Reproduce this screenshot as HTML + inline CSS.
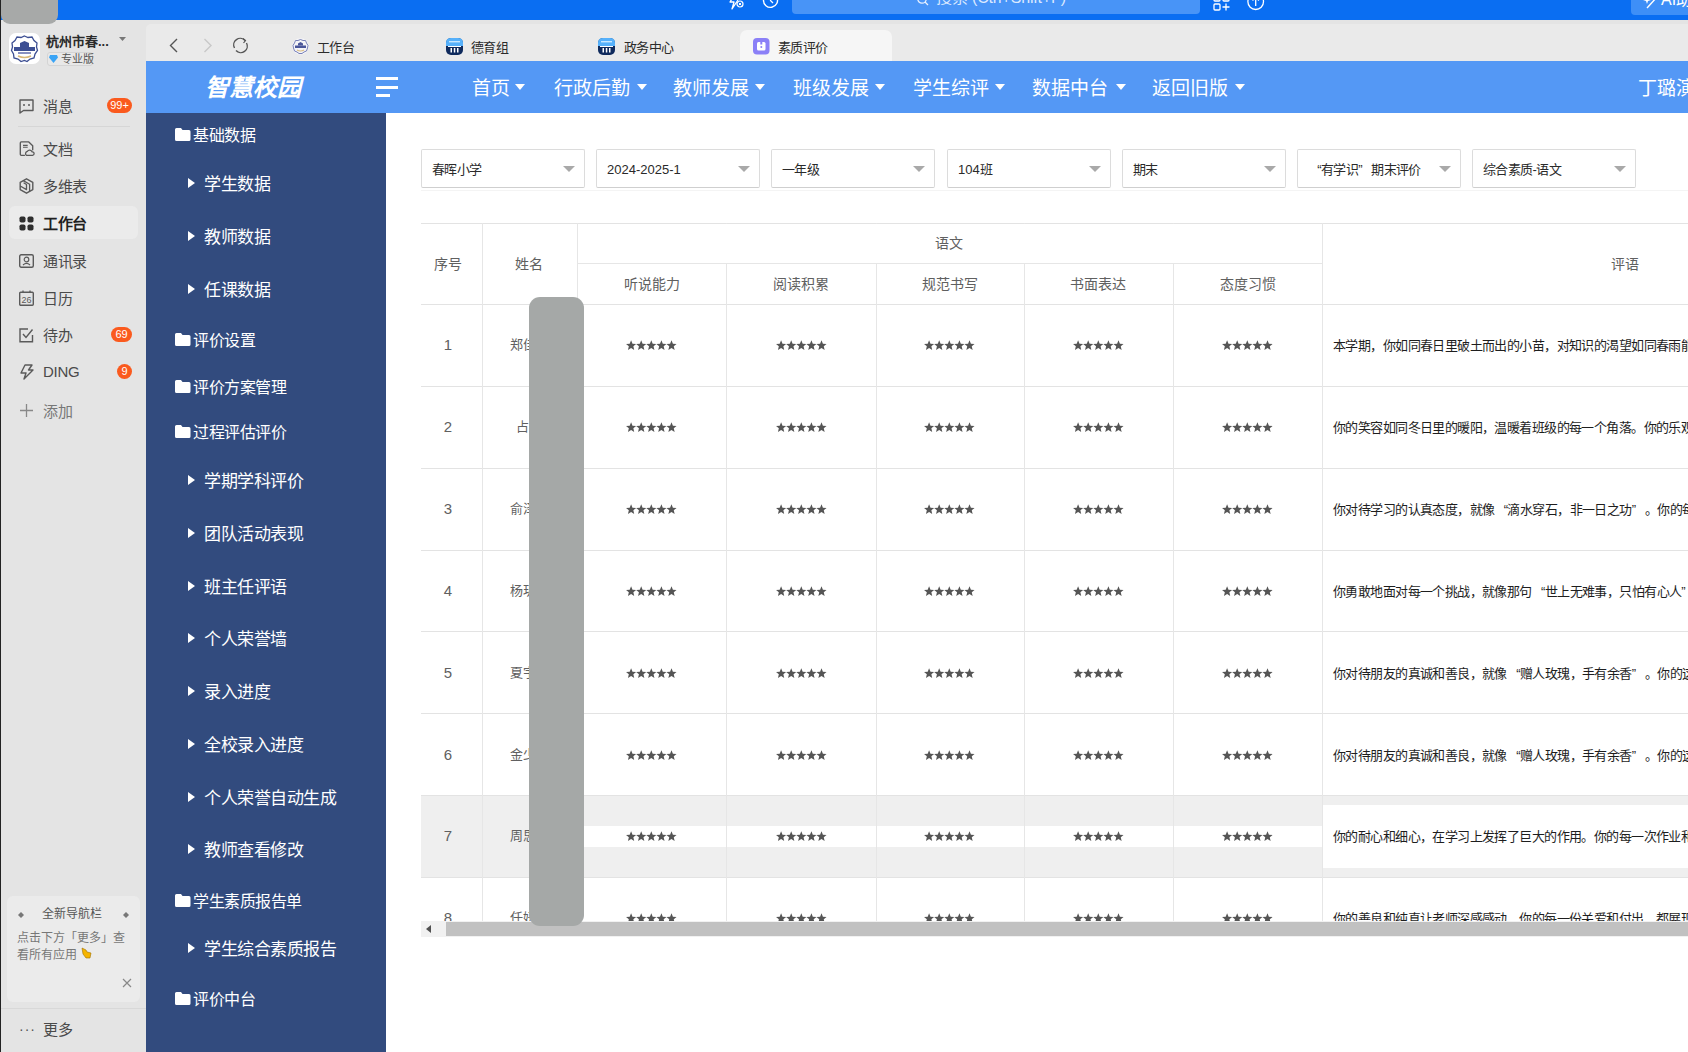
<!DOCTYPE html><html lang="zh-CN"><head><meta charset="utf-8"><style>
*{box-sizing:border-box;margin:0;padding:0}
html,body{width:1688px;height:1052px;overflow:hidden;background:#e4e4e4;font-family:"Liberation Sans",sans-serif;position:relative}
.abs{position:absolute}
svg{position:absolute;overflow:visible}
#topbar{left:0;top:0;width:1688px;height:20px;background:#0a6ef2}
#blob{left:1px;top:0;width:57px;height:24px;background:#a7a9a8;border-radius:0 0 9px 9px}
#dside{left:0;top:20px;width:146px;height:1032px;background:#e4e4e4}
#edge{left:0;top:0;width:1px;height:1052px;background:#222}
#tabbar{left:146px;top:24px;width:1542px;height:37px;background:#eaeaea;border-top-left-radius:5px}
#header{left:146px;top:61px;width:1542px;height:52px;background:#5498f5}
#nside{left:146px;top:113px;width:240px;height:939px;background:#324b7e}
#content{left:386px;top:113px;width:1302px;height:939px;background:#fff}
.dt{position:absolute;left:43px;font-size:15px;letter-spacing:-0.3px;color:#4a4a4a;line-height:16px;white-space:nowrap}
.ql{display:inline-block;width:1em;text-align:right}.qr{display:inline-block;width:1em;text-align:left}
.badge{position:absolute;height:15px;border-radius:8px;background:#fa5a1e;color:#fff;font-size:11px;line-height:15px;text-align:center}
</style></head><body>
<svg width="0" height="0" style="position:absolute"><defs><g id="stars" fill="#555"><path transform="translate(5.10 5.6)" d="M0.00 -5.30 L1.40 -1.93 L5.04 -1.64 L2.27 0.74 L3.12 4.29 L0.00 2.38 L-3.12 4.29 L-2.27 0.74 L-5.04 -1.64 L-1.40 -1.93Z"/><path transform="translate(15.20 5.6)" d="M0.00 -5.30 L1.40 -1.93 L5.04 -1.64 L2.27 0.74 L3.12 4.29 L0.00 2.38 L-3.12 4.29 L-2.27 0.74 L-5.04 -1.64 L-1.40 -1.93Z"/><path transform="translate(25.30 5.6)" d="M0.00 -5.30 L1.40 -1.93 L5.04 -1.64 L2.27 0.74 L3.12 4.29 L0.00 2.38 L-3.12 4.29 L-2.27 0.74 L-5.04 -1.64 L-1.40 -1.93Z"/><path transform="translate(35.40 5.6)" d="M0.00 -5.30 L1.40 -1.93 L5.04 -1.64 L2.27 0.74 L3.12 4.29 L0.00 2.38 L-3.12 4.29 L-2.27 0.74 L-5.04 -1.64 L-1.40 -1.93Z"/><path transform="translate(45.50 5.6)" d="M0.00 -5.30 L1.40 -1.93 L5.04 -1.64 L2.27 0.74 L3.12 4.29 L0.00 2.38 L-3.12 4.29 L-2.27 0.74 L-5.04 -1.64 L-1.40 -1.93Z"/></g></defs></svg>
<div id="dside" class="abs"></div>
<div id="topbar" class="abs"></div>
<div id="blob" class="abs"></div>
<div id="edge" class="abs"></div>
<div class="abs" style="left:9px;top:33px;width:31px;height:31px;border-radius:7px;background:#fff"></div>
<svg style="left:9px;top:33px" width="31" height="31" viewBox="0 0 31 31"><path d="M15.5 3 L19 4.5 L23 4 L25 7.5 L28 10 L27.5 14 L28.5 17.5 L26 21 L25 25 L21 26 L18 28.5 L15.5 27.5 L12 28.5 L9 26 L5 25 L4.5 21 L2.5 17.5 L3.5 14 L3 10 L6 7.5 L8 4 L12 4.5 Z" fill="none" stroke="#3d4f93" stroke-width="1.3"/><rect x="5" y="14" width="21" height="4" fill="#3d4f93"/><path d="M11 14 L11 10 L15.5 8 L20 10 L20 14 Z" fill="#3d4f93"/><rect x="9" y="19" width="13" height="2" fill="#8890c0"/><path d="M9 23 Q15.5 26 22 23" stroke="#d9b878" stroke-width="1.5" fill="none"/></svg>
<div class="abs" style="left:46px;top:34px;font-size:13px;font-weight:bold;color:#2a2a2a;line-height:15px;white-space:nowrap">杭州市春...</div>
<svg style="left:119px;top:37px" width="8" height="5"><path d="M0 0 L7 0 L3.5 4 Z" fill="#777"/></svg>
<div class="abs" style="left:47px;top:52px;width:46px;height:14px;border:1px solid #d4d4d4;border-radius:3px;background:#e8e8e8"></div>
<svg style="left:49px;top:55px" width="9" height="8"><path d="M1 0 L8 0 L9 2.5 L4.5 8 L0 2.5 Z" fill="#3aa4f5"/></svg>
<div class="abs" style="left:61px;top:52px;font-size:11px;color:#555;line-height:14px;white-space:nowrap">专业版</div>
<div class="abs" style="left:9px;top:206px;width:129px;height:33px;border-radius:6px;background:#ebebeb"></div>
<div class="abs" style="left:18px;top:126px;width:112px;height:1px;background:#d6d6d6"></div>
<div class="dt" style="top:99px;">消息</div>
<div class="dt" style="top:142px;">文档</div>
<div class="dt" style="top:179px;">多维表</div>
<div class="dt" style="top:216px;font-weight:bold;color:#1f1f1f;">工作台</div>
<div class="dt" style="top:254px;">通讯录</div>
<div class="dt" style="top:291px;">日历</div>
<div class="dt" style="top:328px;">待办</div>
<div class="dt" style="top:364px;font-size:15px;">DING</div>
<div class="dt" style="top:404px;color:#777;">添加</div>
<svg style="left:19px;top:99px" width="15" height="15"><path d="M1 1 H14 V11.5 H4.5 L1 14 Z" fill="none" stroke="#5a5a5a" stroke-width="1.4" stroke-linejoin="round"/><circle cx="5" cy="6" r="1" fill="#5a5a5a"/><circle cx="10" cy="6" r="1" fill="#5a5a5a"/></svg>
<svg style="left:19px;top:141px" width="15" height="15"><path d="M5.5 14.3 H2.3 Q1.3 14.3 1.3 13.3 V1.9 Q1.3 0.9 2.3 0.9 H9.8 L13.7 4.8 V8.8" fill="none" stroke="#5a5a5a" stroke-width="1.35" stroke-linejoin="round" stroke-linecap="round"/><path d="M4 4.4 H8.7 M4 6.3 H8.7" stroke="#5a5a5a" stroke-width="1.1"/><path d="M7.4 14.3 A2.2 2.2 0 0 1 8.3 10.4 A2.8 2.8 0 0 1 13.2 10.9 A1.7 1.7 0 0 1 13.6 14.3 Z" fill="none" stroke="#5a5a5a" stroke-width="1.3" stroke-linejoin="round"/></svg>
<svg style="left:19px;top:178px" width="15" height="16"><path d="M7.5 0.8 L13.8 4.4 V11.6 L7.5 15.2 L1.2 11.6 V4.4 Z" fill="none" stroke="#5a5a5a" stroke-width="1.4" stroke-linejoin="round"/><path d="M4.3 2.6 L10.6 6.2 V13.4 M1.2 8 L7.5 11.6 V6.5 L4.6 4.8" fill="none" stroke="#5a5a5a" stroke-width="1.3" stroke-linejoin="round"/></svg>
<svg style="left:19px;top:216px" width="15" height="15"><rect x="0.5" y="0.5" width="6" height="6" rx="1.8" fill="#2e2e2e"/><rect x="8.5" y="0.5" width="6" height="6" rx="1.8" fill="#2e2e2e"/><rect x="0.5" y="8.5" width="6" height="6" rx="1.8" fill="#2e2e2e"/><rect x="8.5" y="8.5" width="6" height="6" rx="1.8" fill="#2e2e2e"/></svg>
<svg style="left:19px;top:254px" width="15" height="14"><rect x="0.7" y="0.7" width="13.6" height="12.6" rx="1.5" fill="none" stroke="#5a5a5a" stroke-width="1.4"/><circle cx="7.5" cy="5.5" r="2.3" fill="none" stroke="#5a5a5a" stroke-width="1.2"/><path d="M4 11 Q7.5 7.8 11 11" fill="none" stroke="#5a5a5a" stroke-width="1.2"/></svg>
<svg style="left:19px;top:290px" width="15" height="16"><rect x="0.7" y="2.2" width="13.6" height="13" rx="1" fill="none" stroke="#5a5a5a" stroke-width="1.4"/><path d="M4 0.5 V3 M11 0.5 V3" stroke="#5a5a5a" stroke-width="1.3"/><text x="7.5" y="13" font-size="9" text-anchor="middle" fill="#5a5a5a" font-family="Liberation Sans">26</text></svg>
<svg style="left:19px;top:328px" width="15" height="15"><path d="M13.5 7 V13.8 H1 V1 H9" fill="none" stroke="#5a5a5a" stroke-width="1.4"/><path d="M4 6 L7 9.5 L13.5 1.5" fill="none" stroke="#5a5a5a" stroke-width="1.4"/></svg>
<svg style="left:19px;top:364px" width="15" height="16"><path d="M6 1 H13 L9.5 6 H14 L5 15 L7 9 H2 Z" fill="none" stroke="#5a5a5a" stroke-width="1.4" stroke-linejoin="round"/></svg>
<svg style="left:19px;top:403px" width="15" height="15"><path d="M7.5 1 V14 M1 7.5 H14" stroke="#888" stroke-width="1.3"/></svg>
<div class="badge" style="left:107px;top:98px;width:25px">99+</div>
<div class="badge" style="left:111px;top:327px;width:21px">69</div>
<div class="badge" style="left:117px;top:364px;width:15px">9</div>
<div class="abs" style="left:7px;top:896px;width:133px;height:106px;border-radius:6px;background:#ebebeb"></div>
<div class="abs" style="left:42px;top:907px;font-size:12px;color:#555;line-height:15px;white-space:nowrap">全新导航栏</div>
<svg style="left:18px;top:912px" width="6" height="6"><path d="M3 0 L6 3 L3 6 L0 3Z" fill="#777"/></svg>
<svg style="left:123px;top:912px" width="6" height="6"><path d="M3 0 L6 3 L3 6 L0 3Z" fill="#777"/></svg>
<div class="abs" style="left:17px;top:930px;width:118px;font-size:12px;color:#777;line-height:17px;">点击下方「更多」查看所有应用</div>
<svg style="left:80px;top:947px" width="12" height="12"><path d="M2 1 L6 3 L7 5 L11 6 L10 11 L6 11 L3 7 Z" fill="#f5b400" stroke="#a07000" stroke-width="0.6"/></svg>
<svg style="left:122px;top:978px" width="10" height="10"><path d="M1 1 L9 9 M9 1 L1 9" stroke="#888" stroke-width="1.2"/></svg>
<div class="abs" style="left:1px;top:1008px;width:145px;height:1px;background:#d8d8d8"></div>
<div class="abs" style="left:19px;top:1021px;font-size:14px;color:#555;line-height:16px;letter-spacing:1px">···</div>
<div class="dt" style="top:1022px">更多</div>
<div id="tabbar" class="abs"></div>
<div id="header" class="abs"></div>
<div id="nside" class="abs"></div>
<div id="content" class="abs"></div>
<div class="abs" style="left:792px;top:-6px;width:408px;height:20px;border-radius:4px;background:#4894f7"></div>
<svg style="left:917px;top:-6px" width="12" height="12"><circle cx="5" cy="5" r="4.2" fill="none" stroke="#e8f1ff" stroke-width="1.3"/><path d="M8 8 L11 11" stroke="#e8f1ff" stroke-width="1.3"/></svg>
<div class="abs" style="left:936px;top:-10px;font-size:16px;letter-spacing:-0.15px;color:#dbe9ff;line-height:16px;white-space:nowrap">搜索 (Ctrl+Shift+F)</div>
<svg style="left:729px;top:-6px" width="15" height="16"><path d="M6 0 L1 8 H5 L3 15 L9 6" fill="none" stroke="#fff" stroke-width="1.3" stroke-linejoin="round"/><circle cx="11" cy="10" r="3" fill="none" stroke="#fff" stroke-width="1.2"/><path d="M9.7 8.7 L12.3 11.3 M12.3 8.7 L9.7 11.3" stroke="#fff" stroke-width="1"/></svg>
<svg style="left:762px;top:-8px" width="17" height="18"><path d="M1.5 8 A7 7 0 1 0 4 3" fill="none" stroke="#fff" stroke-width="1.4"/><path d="M8.5 4 V8.5 L11 11" fill="none" stroke="#fff" stroke-width="1.3"/></svg>
<svg style="left:1213px;top:-6px" width="17" height="18"><rect x="1" y="1" width="6" height="6" rx="1" fill="none" stroke="#fff" stroke-width="1.3"/><rect x="1" y="10" width="6" height="6" rx="1" fill="none" stroke="#fff" stroke-width="1.3"/><rect x="10" y="1" width="6" height="6" rx="1" fill="none" stroke="#fff" stroke-width="1.3"/><path d="M13 9.5 V16.5 M9.5 13 H16.5" stroke="#fff" stroke-width="1.3"/></svg>
<svg style="left:1247px;top:-7px" width="18" height="18"><circle cx="8.7" cy="8.7" r="7.8" fill="none" stroke="#fff" stroke-width="1.3"/><path d="M8.7 13 V4.5 M5.5 7.5 L8.7 4.5 L11.9 7.5" fill="none" stroke="#fff" stroke-width="1.3"/></svg>
<div class="abs" style="left:1631px;top:-6px;width:70px;height:21px;border-radius:4px;background:#3e8ff7"></div>
<svg style="left:1644px;top:-4px" width="14" height="13"><path d="M13 1 L3 12" stroke="#fff" stroke-width="1.4"/><path d="M3 0 L4 3 L7 4 L4 5 L3 8 L2 5 L-1 4 L2 3 Z" fill="#fff"/></svg>
<div class="abs" style="left:1661px;top:-9px;font-size:16px;color:#fff;line-height:17px;white-space:nowrap">AI助理</div>
<svg style="left:169px;top:38px" width="10" height="16"><path d="M8 1 L1.5 7.5 L8 14" fill="none" stroke="#555" stroke-width="1.4"/></svg>
<svg style="left:203px;top:38px" width="10" height="16"><path d="M1.5 1 L8 7.5 L1.5 14" fill="none" stroke="#c8c8c8" stroke-width="1.4"/></svg>
<svg style="left:232px;top:37px" width="17" height="17"><path d="M2.5 11 A6.5 6.5 0 0 1 13 3.5 M14.5 6 A6.5 6.5 0 0 1 4 13.5" fill="none" stroke="#555" stroke-width="1.4"/><path d="M11 1.5 L13.5 3.5 L11.5 6" fill="none" stroke="#555" stroke-width="1.2"/></svg>
<div class="abs" style="left:740px;top:30px;width:152px;height:31px;border-radius:7px 7px 0 0;background:#f6f6f6"></div>
<svg style="left:292px;top:38px" width="17" height="17"><circle cx="8.5" cy="8.5" r="8.3" fill="#f4f4f8"/><path d="M8.5 1.5 L11 2.5 L13.5 2.5 L14.5 5 L16 7.5 L15.5 10 L14.5 13 L12 14 L10 15.5 L7 15.5 L5 14 L2.5 13 L1.5 10 L1 7.5 L2.5 5 L3.5 2.5 L6 2.5 Z" fill="none" stroke="#6a74b0" stroke-width="0.9"/><rect x="3" y="7.5" width="11" height="2.5" fill="#4a569a"/><path d="M6 7.5 V5.5 L8.5 4 L11 5.5 V7.5Z" fill="#4a569a"/><path d="M5 12 Q8.5 14 12 12" stroke="#d9bc80" stroke-width="1.2" fill="none"/></svg>
<svg style="left:446px;top:38px" width="17" height="17"><rect x="0" y="0" width="17" height="17" rx="5" fill="#0f2a5c"/><path d="M0 5 Q0 0 5 0 H12 Q17 0 17 5 V8 H0 Z" fill="#56b1fb"/><rect x="3" y="3" width="11" height="1.4" fill="#c8e8ff"/><rect x="2" y="8" width="13" height="1" fill="#fff"/><rect x="4.5" y="10" width="1.5" height="4.5" fill="#fff"/><rect x="7.8" y="10" width="1.5" height="4.5" fill="#fff"/><rect x="11" y="10" width="1.5" height="4.5" fill="#fff"/></svg>
<svg style="left:598px;top:38px" width="17" height="17"><rect x="0" y="0" width="17" height="17" rx="5" fill="#0f2a5c"/><path d="M0 5 Q0 0 5 0 H12 Q17 0 17 5 V8 H0 Z" fill="#56b1fb"/><rect x="3" y="3" width="11" height="1.4" fill="#c8e8ff"/><rect x="2" y="8" width="13" height="1" fill="#fff"/><rect x="4.5" y="10" width="1.5" height="4.5" fill="#fff"/><rect x="7.8" y="10" width="1.5" height="4.5" fill="#fff"/><rect x="11" y="10" width="1.5" height="4.5" fill="#fff"/></svg>
<svg style="left:753px;top:38px" width="17" height="17"><rect x="0" y="0" width="16.5" height="16.5" rx="4" fill="#8b80f7"/><rect x="4" y="4" width="8.5" height="8.5" rx="1.5" fill="#fff"/><rect x="7.3" y="4" width="2" height="2.5" fill="#8b80f7"/><circle cx="8.3" cy="9" r="1" fill="#8b80f7"/></svg>
<div class="abs" style="left:317px;top:39.5px;font-size:13px;letter-spacing:-0.6px;color:#2b2b2b;line-height:15px;white-space:nowrap">工作台</div>
<div class="abs" style="left:471px;top:39.5px;font-size:13px;letter-spacing:-0.6px;color:#2b2b2b;line-height:15px;white-space:nowrap">德育组</div>
<div class="abs" style="left:624px;top:39.5px;font-size:13px;letter-spacing:-0.6px;color:#2b2b2b;line-height:15px;white-space:nowrap">政务中心</div>
<div class="abs" style="left:778px;top:39.5px;font-size:13px;letter-spacing:-0.6px;color:#2b2b2b;line-height:15px;white-space:nowrap">素质评价</div>
<div class="abs" style="left:204.5px;top:73.5px;font-size:24px;font-weight:bold;font-style:italic;color:#fff;line-height:28px;white-space:nowrap;font-family:'Liberation Serif',serif">智慧校园</div>
<div class="abs" style="left:376px;top:77px;width:22px;height:3px;background:#fff"></div>
<div class="abs" style="left:376px;top:86px;width:22px;height:3px;background:#fff"></div>
<div class="abs" style="left:376px;top:94px;width:14px;height:3px;background:#fff"></div>
<div class="abs" style="left:472px;top:77.5px;font-size:19px;color:#fff;line-height:22px;white-space:nowrap">首页</div>
<svg style="left:515px;top:84px" width="10" height="6"><path d="M0 0 H10 L5 6 Z" fill="#fff"/></svg>
<div class="abs" style="left:554px;top:77.5px;font-size:19px;color:#fff;line-height:22px;white-space:nowrap">行政后勤</div>
<svg style="left:637px;top:84px" width="10" height="6"><path d="M0 0 H10 L5 6 Z" fill="#fff"/></svg>
<div class="abs" style="left:673px;top:77.5px;font-size:19px;color:#fff;line-height:22px;white-space:nowrap">教师发展</div>
<svg style="left:755px;top:84px" width="10" height="6"><path d="M0 0 H10 L5 6 Z" fill="#fff"/></svg>
<div class="abs" style="left:793px;top:77.5px;font-size:19px;color:#fff;line-height:22px;white-space:nowrap">班级发展</div>
<svg style="left:875px;top:84px" width="10" height="6"><path d="M0 0 H10 L5 6 Z" fill="#fff"/></svg>
<div class="abs" style="left:913px;top:77.5px;font-size:19px;color:#fff;line-height:22px;white-space:nowrap">学生综评</div>
<svg style="left:995px;top:84px" width="10" height="6"><path d="M0 0 H10 L5 6 Z" fill="#fff"/></svg>
<div class="abs" style="left:1032px;top:77.5px;font-size:19px;color:#fff;line-height:22px;white-space:nowrap">数据中台</div>
<svg style="left:1116px;top:84px" width="10" height="6"><path d="M0 0 H10 L5 6 Z" fill="#fff"/></svg>
<div class="abs" style="left:1152px;top:77.5px;font-size:19px;color:#fff;line-height:22px;white-space:nowrap">返回旧版</div>
<svg style="left:1235px;top:84px" width="10" height="6"><path d="M0 0 H10 L5 6 Z" fill="#fff"/></svg>
<div class="abs" style="left:1638px;top:77.5px;font-size:19px;color:#fff;line-height:22px;white-space:nowrap">丁璐演示</div>
<svg style="left:175px;top:128px" width="16" height="13"><path d="M0 1.5 Q0 0 1.5 0 H6 L7.5 2 H14 Q15.5 2 15.5 3.5 V11.5 Q15.5 13 14 13 H1.5 Q0 13 0 11.5 Z" fill="#fff"/></svg>
<div class="abs" style="left:193px;top:127px;font-size:16px;letter-spacing:-0.45px;color:#fff;line-height:18px;white-space:nowrap">基础数据</div>
<svg style="left:188px;top:178px" width="7" height="10"><path d="M0 0 L7 5 L0 10 Z" fill="#fff"/></svg>
<div class="abs" style="left:204px;top:175px;font-size:17px;letter-spacing:-0.45px;color:#fff;line-height:20px;white-space:nowrap">学生数据</div>
<svg style="left:188px;top:231px" width="7" height="10"><path d="M0 0 L7 5 L0 10 Z" fill="#fff"/></svg>
<div class="abs" style="left:204px;top:228px;font-size:17px;letter-spacing:-0.45px;color:#fff;line-height:20px;white-space:nowrap">教师数据</div>
<svg style="left:188px;top:284px" width="7" height="10"><path d="M0 0 L7 5 L0 10 Z" fill="#fff"/></svg>
<div class="abs" style="left:204px;top:281px;font-size:17px;letter-spacing:-0.45px;color:#fff;line-height:20px;white-space:nowrap">任课数据</div>
<svg style="left:175px;top:333px" width="16" height="13"><path d="M0 1.5 Q0 0 1.5 0 H6 L7.5 2 H14 Q15.5 2 15.5 3.5 V11.5 Q15.5 13 14 13 H1.5 Q0 13 0 11.5 Z" fill="#fff"/></svg>
<div class="abs" style="left:193px;top:332px;font-size:16px;letter-spacing:-0.45px;color:#fff;line-height:18px;white-space:nowrap">评价设置</div>
<svg style="left:175px;top:380px" width="16" height="13"><path d="M0 1.5 Q0 0 1.5 0 H6 L7.5 2 H14 Q15.5 2 15.5 3.5 V11.5 Q15.5 13 14 13 H1.5 Q0 13 0 11.5 Z" fill="#fff"/></svg>
<div class="abs" style="left:193px;top:379px;font-size:16px;letter-spacing:-0.45px;color:#fff;line-height:18px;white-space:nowrap">评价方案管理</div>
<svg style="left:175px;top:425px" width="16" height="13"><path d="M0 1.5 Q0 0 1.5 0 H6 L7.5 2 H14 Q15.5 2 15.5 3.5 V11.5 Q15.5 13 14 13 H1.5 Q0 13 0 11.5 Z" fill="#fff"/></svg>
<div class="abs" style="left:193px;top:424px;font-size:16px;letter-spacing:-0.45px;color:#fff;line-height:18px;white-space:nowrap">过程评估评价</div>
<svg style="left:188px;top:475px" width="7" height="10"><path d="M0 0 L7 5 L0 10 Z" fill="#fff"/></svg>
<div class="abs" style="left:204px;top:472px;font-size:17px;letter-spacing:-0.45px;color:#fff;line-height:20px;white-space:nowrap">学期学科评价</div>
<svg style="left:188px;top:528px" width="7" height="10"><path d="M0 0 L7 5 L0 10 Z" fill="#fff"/></svg>
<div class="abs" style="left:204px;top:525px;font-size:17px;letter-spacing:-0.45px;color:#fff;line-height:20px;white-space:nowrap">团队活动表现</div>
<svg style="left:188px;top:581px" width="7" height="10"><path d="M0 0 L7 5 L0 10 Z" fill="#fff"/></svg>
<div class="abs" style="left:204px;top:578px;font-size:17px;letter-spacing:-0.45px;color:#fff;line-height:20px;white-space:nowrap">班主任评语</div>
<svg style="left:188px;top:633px" width="7" height="10"><path d="M0 0 L7 5 L0 10 Z" fill="#fff"/></svg>
<div class="abs" style="left:204px;top:630px;font-size:17px;letter-spacing:-0.45px;color:#fff;line-height:20px;white-space:nowrap">个人荣誉墙</div>
<svg style="left:188px;top:686px" width="7" height="10"><path d="M0 0 L7 5 L0 10 Z" fill="#fff"/></svg>
<div class="abs" style="left:204px;top:683px;font-size:17px;letter-spacing:-0.45px;color:#fff;line-height:20px;white-space:nowrap">录入进度</div>
<svg style="left:188px;top:739px" width="7" height="10"><path d="M0 0 L7 5 L0 10 Z" fill="#fff"/></svg>
<div class="abs" style="left:204px;top:736px;font-size:17px;letter-spacing:-0.45px;color:#fff;line-height:20px;white-space:nowrap">全校录入进度</div>
<svg style="left:188px;top:792px" width="7" height="10"><path d="M0 0 L7 5 L0 10 Z" fill="#fff"/></svg>
<div class="abs" style="left:204px;top:789px;font-size:17px;letter-spacing:-0.45px;color:#fff;line-height:20px;white-space:nowrap">个人荣誉自动生成</div>
<svg style="left:188px;top:844px" width="7" height="10"><path d="M0 0 L7 5 L0 10 Z" fill="#fff"/></svg>
<div class="abs" style="left:204px;top:841px;font-size:17px;letter-spacing:-0.45px;color:#fff;line-height:20px;white-space:nowrap">教师查看修改</div>
<svg style="left:175px;top:894px" width="16" height="13"><path d="M0 1.5 Q0 0 1.5 0 H6 L7.5 2 H14 Q15.5 2 15.5 3.5 V11.5 Q15.5 13 14 13 H1.5 Q0 13 0 11.5 Z" fill="#fff"/></svg>
<div class="abs" style="left:193px;top:893px;font-size:16px;letter-spacing:-0.45px;color:#fff;line-height:18px;white-space:nowrap">学生素质报告单</div>
<svg style="left:188px;top:943px" width="7" height="10"><path d="M0 0 L7 5 L0 10 Z" fill="#fff"/></svg>
<div class="abs" style="left:204px;top:940px;font-size:17px;letter-spacing:-0.45px;color:#fff;line-height:20px;white-space:nowrap">学生综合素质报告</div>
<svg style="left:175px;top:992px" width="16" height="13"><path d="M0 1.5 Q0 0 1.5 0 H6 L7.5 2 H14 Q15.5 2 15.5 3.5 V11.5 Q15.5 13 14 13 H1.5 Q0 13 0 11.5 Z" fill="#fff"/></svg>
<div class="abs" style="left:193px;top:991px;font-size:16px;letter-spacing:-0.45px;color:#fff;line-height:18px;white-space:nowrap">评价中台</div>
<div class="abs" style="left:421px;top:149px;width:164px;height:39px;border:1px solid #dcdcdc;border-bottom-color:#cfcfcf;border-radius:2px;background:#fff"></div>
<div class="abs" style="left:432px;top:162px;font-size:13px;letter-spacing:-0.6px;color:#2a2a2a;line-height:15px;white-space:nowrap">春晖小学</div>
<svg style="left:563px;top:166px" width="12" height="6"><path d="M0 0 H12 L6 6 Z" fill="#a9a9a9"/></svg>
<div class="abs" style="left:596px;top:149px;width:164px;height:39px;border:1px solid #dcdcdc;border-bottom-color:#cfcfcf;border-radius:2px;background:#fff"></div>
<div class="abs" style="left:607px;top:162px;font-size:13px;letter-spacing:0;color:#2a2a2a;line-height:15px;white-space:nowrap">2024-2025-1</div>
<svg style="left:738px;top:166px" width="12" height="6"><path d="M0 0 H12 L6 6 Z" fill="#a9a9a9"/></svg>
<div class="abs" style="left:771px;top:149px;width:164px;height:39px;border:1px solid #dcdcdc;border-bottom-color:#cfcfcf;border-radius:2px;background:#fff"></div>
<div class="abs" style="left:782px;top:162px;font-size:13px;letter-spacing:-0.6px;color:#2a2a2a;line-height:15px;white-space:nowrap">一年级</div>
<svg style="left:913px;top:166px" width="12" height="6"><path d="M0 0 H12 L6 6 Z" fill="#a9a9a9"/></svg>
<div class="abs" style="left:947px;top:149px;width:164px;height:39px;border:1px solid #dcdcdc;border-bottom-color:#cfcfcf;border-radius:2px;background:#fff"></div>
<div class="abs" style="left:958px;top:162px;font-size:13px;letter-spacing:0;color:#2a2a2a;line-height:15px;white-space:nowrap">104班</div>
<svg style="left:1089px;top:166px" width="12" height="6"><path d="M0 0 H12 L6 6 Z" fill="#a9a9a9"/></svg>
<div class="abs" style="left:1122px;top:149px;width:164px;height:39px;border:1px solid #dcdcdc;border-bottom-color:#cfcfcf;border-radius:2px;background:#fff"></div>
<div class="abs" style="left:1133px;top:162px;font-size:13px;letter-spacing:-0.6px;color:#2a2a2a;line-height:15px;white-space:nowrap">期末</div>
<svg style="left:1264px;top:166px" width="12" height="6"><path d="M0 0 H12 L6 6 Z" fill="#a9a9a9"/></svg>
<div class="abs" style="left:1297px;top:149px;width:164px;height:39px;border:1px solid #dcdcdc;border-bottom-color:#cfcfcf;border-radius:2px;background:#fff"></div>
<div class="abs" style="left:1308px;top:162px;font-size:13px;letter-spacing:-0.6px;color:#2a2a2a;line-height:15px;white-space:nowrap"><span class="ql">“</span>有学识<span class="qr">”</span>期末评价</div>
<svg style="left:1439px;top:166px" width="12" height="6"><path d="M0 0 H12 L6 6 Z" fill="#a9a9a9"/></svg>
<div class="abs" style="left:1472px;top:149px;width:164px;height:39px;border:1px solid #dcdcdc;border-bottom-color:#cfcfcf;border-radius:2px;background:#fff"></div>
<div class="abs" style="left:1483px;top:162px;font-size:13px;letter-spacing:-0.6px;color:#2a2a2a;line-height:15px;white-space:nowrap">综合素质-语文</div>
<svg style="left:1614px;top:166px" width="12" height="6"><path d="M0 0 H12 L6 6 Z" fill="#a9a9a9"/></svg>
<div class="abs" style="left:421px;top:190px;width:1267px;height:1px;background:#f4f4f4"></div>
<div class="abs" style="left:421px;top:223px;width:1267px;height:1px;background:#e3e3e3"></div>
<div class="abs" style="left:577px;top:263px;width:745px;height:1px;background:#e6e6e6"></div>
<div class="abs" style="left:421px;top:796px;width:1267px;height:81px;background:#efefef"></div>
<div class="abs" style="left:577px;top:826px;width:745px;height:21px;background:#fff"></div>
<div class="abs" style="left:1323px;top:805px;width:365px;height:63px;background:#fff"></div>
<div class="abs" style="left:421px;top:304px;width:1267px;height:1px;background:#e3e3e3"></div>
<div class="abs" style="left:421px;top:386px;width:1267px;height:1px;background:#e3e3e3"></div>
<div class="abs" style="left:421px;top:468px;width:1267px;height:1px;background:#e3e3e3"></div>
<div class="abs" style="left:421px;top:550px;width:1267px;height:1px;background:#e3e3e3"></div>
<div class="abs" style="left:421px;top:631px;width:1267px;height:1px;background:#e3e3e3"></div>
<div class="abs" style="left:421px;top:713px;width:1267px;height:1px;background:#e3e3e3"></div>
<div class="abs" style="left:421px;top:795px;width:1267px;height:1px;background:#e3e3e3"></div>
<div class="abs" style="left:421px;top:877px;width:1267px;height:1px;background:#e3e3e3"></div>
<div class="abs" style="left:482px;top:223px;width:1px;height:698px;background:#e6e6e6"></div>
<div class="abs" style="left:577px;top:223px;width:1px;height:698px;background:#e6e6e6"></div>
<div class="abs" style="left:726px;top:223px;width:1px;height:698px;background:#e6e6e6"></div>
<div class="abs" style="left:876px;top:223px;width:1px;height:698px;background:#e6e6e6"></div>
<div class="abs" style="left:1024px;top:223px;width:1px;height:698px;background:#e6e6e6"></div>
<div class="abs" style="left:1173px;top:223px;width:1px;height:698px;background:#e6e6e6"></div>
<div class="abs" style="left:1322px;top:223px;width:1px;height:698px;background:#e6e6e6"></div>
<div class="abs" style="left:578px;top:224px;width:744px;height:39px;background:#fff"></div>
<div class="abs" style="left:348px;top:254px;width:200px;text-align:center;font-size:14px;line-height:20px;color:#606060;white-space:nowrap;">序号</div>
<div class="abs" style="left:429px;top:254px;width:200px;text-align:center;font-size:14px;line-height:20px;color:#606060;white-space:nowrap;">姓名</div>
<div class="abs" style="left:849px;top:233px;width:200px;text-align:center;font-size:14px;line-height:20px;color:#606060;white-space:nowrap;">语文</div>
<div class="abs" style="left:1525px;top:254px;width:200px;text-align:center;font-size:14px;line-height:20px;color:#606060;white-space:nowrap;">评语</div>
<div class="abs" style="left:552px;top:274px;width:200px;text-align:center;font-size:14px;line-height:20px;color:#606060;white-space:nowrap;">听说能力</div>
<div class="abs" style="left:701px;top:274px;width:200px;text-align:center;font-size:14px;line-height:20px;color:#606060;white-space:nowrap;">阅读积累</div>
<div class="abs" style="left:850px;top:274px;width:200px;text-align:center;font-size:14px;line-height:20px;color:#606060;white-space:nowrap;">规范书写</div>
<div class="abs" style="left:998px;top:274px;width:200px;text-align:center;font-size:14px;line-height:20px;color:#606060;white-space:nowrap;">书面表达</div>
<div class="abs" style="left:1148px;top:274px;width:200px;text-align:center;font-size:14px;line-height:20px;color:#606060;white-space:nowrap;">态度习惯</div>
<div class="abs" style="left:421px;top:305px;width:1267px;height:616px;overflow:hidden">
<div class="abs" style="left:-23px;top:30px;width:100px;text-align:center;font-size:15px;line-height:20px;color:#606060">1</div>
<div class="abs" style="left:48px;top:30px;width:120px;text-align:center;font-size:13px;line-height:20px;color:#606060;white-space:nowrap">郑佳怡</div>
<svg style="left:205.1px;top:35.4px" width="51" height="10" viewBox="0 0 51 10"><use href="#stars"/></svg>
<svg style="left:354.6px;top:35.4px" width="51" height="10" viewBox="0 0 51 10"><use href="#stars"/></svg>
<svg style="left:503.3px;top:35.4px" width="51" height="10" viewBox="0 0 51 10"><use href="#stars"/></svg>
<svg style="left:652.1px;top:35.4px" width="51" height="10" viewBox="0 0 51 10"><use href="#stars"/></svg>
<svg style="left:801.2px;top:35.4px" width="51" height="10" viewBox="0 0 51 10"><use href="#stars"/></svg>
<div class="abs" style="left:912px;top:31px;font-size:13px;letter-spacing:-0.58px;line-height:20px;color:#1e1e1e;white-space:nowrap">本学期，你如同春日里破土而出的小苗，对知识的渴望如同春雨能滋润大地</div>
<div class="abs" style="left:-23px;top:112px;width:100px;text-align:center;font-size:15px;line-height:20px;color:#606060">2</div>
<div class="abs" style="left:48px;top:112px;width:120px;text-align:center;font-size:13px;line-height:20px;color:#606060;white-space:nowrap">占宇</div>
<svg style="left:205.1px;top:117.4px" width="51" height="10" viewBox="0 0 51 10"><use href="#stars"/></svg>
<svg style="left:354.6px;top:117.4px" width="51" height="10" viewBox="0 0 51 10"><use href="#stars"/></svg>
<svg style="left:503.3px;top:117.4px" width="51" height="10" viewBox="0 0 51 10"><use href="#stars"/></svg>
<svg style="left:652.1px;top:117.4px" width="51" height="10" viewBox="0 0 51 10"><use href="#stars"/></svg>
<svg style="left:801.2px;top:117.4px" width="51" height="10" viewBox="0 0 51 10"><use href="#stars"/></svg>
<div class="abs" style="left:912px;top:113px;font-size:13px;letter-spacing:-0.58px;line-height:20px;color:#1e1e1e;white-space:nowrap">你的笑容如同冬日里的暖阳，温暖着班级的每一个角落。你的乐观</div>
<div class="abs" style="left:-23px;top:194px;width:100px;text-align:center;font-size:15px;line-height:20px;color:#606060">3</div>
<div class="abs" style="left:48px;top:194px;width:120px;text-align:center;font-size:13px;line-height:20px;color:#606060;white-space:nowrap">俞泽宇</div>
<svg style="left:205.1px;top:199.4px" width="51" height="10" viewBox="0 0 51 10"><use href="#stars"/></svg>
<svg style="left:354.6px;top:199.4px" width="51" height="10" viewBox="0 0 51 10"><use href="#stars"/></svg>
<svg style="left:503.3px;top:199.4px" width="51" height="10" viewBox="0 0 51 10"><use href="#stars"/></svg>
<svg style="left:652.1px;top:199.4px" width="51" height="10" viewBox="0 0 51 10"><use href="#stars"/></svg>
<svg style="left:801.2px;top:199.4px" width="51" height="10" viewBox="0 0 51 10"><use href="#stars"/></svg>
<div class="abs" style="left:912px;top:195px;font-size:13px;letter-spacing:-0.58px;line-height:20px;color:#1e1e1e;white-space:nowrap">你对待学习的认真态度，就像<span class="ql">“</span>滴水穿石，非一日之功<span class="qr">”</span>。你的每一次</div>
<div class="abs" style="left:-23px;top:276px;width:100px;text-align:center;font-size:15px;line-height:20px;color:#606060">4</div>
<div class="abs" style="left:48px;top:276px;width:120px;text-align:center;font-size:13px;line-height:20px;color:#606060;white-space:nowrap">杨玥然</div>
<svg style="left:205.1px;top:281.4px" width="51" height="10" viewBox="0 0 51 10"><use href="#stars"/></svg>
<svg style="left:354.6px;top:281.4px" width="51" height="10" viewBox="0 0 51 10"><use href="#stars"/></svg>
<svg style="left:503.3px;top:281.4px" width="51" height="10" viewBox="0 0 51 10"><use href="#stars"/></svg>
<svg style="left:652.1px;top:281.4px" width="51" height="10" viewBox="0 0 51 10"><use href="#stars"/></svg>
<svg style="left:801.2px;top:281.4px" width="51" height="10" viewBox="0 0 51 10"><use href="#stars"/></svg>
<div class="abs" style="left:912px;top:277px;font-size:13px;letter-spacing:-0.58px;line-height:20px;color:#1e1e1e;white-space:nowrap">你勇敢地面对每一个挑战，就像那句<span class="ql">“</span>世上无难事，只怕有心人<span class="qr">”</span>。</div>
<div class="abs" style="left:-23px;top:358px;width:100px;text-align:center;font-size:15px;line-height:20px;color:#606060">5</div>
<div class="abs" style="left:48px;top:358px;width:120px;text-align:center;font-size:13px;line-height:20px;color:#606060;white-space:nowrap">夏宇轩</div>
<svg style="left:205.1px;top:363.4px" width="51" height="10" viewBox="0 0 51 10"><use href="#stars"/></svg>
<svg style="left:354.6px;top:363.4px" width="51" height="10" viewBox="0 0 51 10"><use href="#stars"/></svg>
<svg style="left:503.3px;top:363.4px" width="51" height="10" viewBox="0 0 51 10"><use href="#stars"/></svg>
<svg style="left:652.1px;top:363.4px" width="51" height="10" viewBox="0 0 51 10"><use href="#stars"/></svg>
<svg style="left:801.2px;top:363.4px" width="51" height="10" viewBox="0 0 51 10"><use href="#stars"/></svg>
<div class="abs" style="left:912px;top:359px;font-size:13px;letter-spacing:-0.58px;line-height:20px;color:#1e1e1e;white-space:nowrap">你对待朋友的真诚和善良，就像<span class="ql">“</span>赠人玫瑰，手有余香<span class="qr">”</span>。你的这份</div>
<div class="abs" style="left:-23px;top:440px;width:100px;text-align:center;font-size:15px;line-height:20px;color:#606060">6</div>
<div class="abs" style="left:48px;top:440px;width:120px;text-align:center;font-size:13px;line-height:20px;color:#606060;white-space:nowrap">金少华</div>
<svg style="left:205.1px;top:445.4px" width="51" height="10" viewBox="0 0 51 10"><use href="#stars"/></svg>
<svg style="left:354.6px;top:445.4px" width="51" height="10" viewBox="0 0 51 10"><use href="#stars"/></svg>
<svg style="left:503.3px;top:445.4px" width="51" height="10" viewBox="0 0 51 10"><use href="#stars"/></svg>
<svg style="left:652.1px;top:445.4px" width="51" height="10" viewBox="0 0 51 10"><use href="#stars"/></svg>
<svg style="left:801.2px;top:445.4px" width="51" height="10" viewBox="0 0 51 10"><use href="#stars"/></svg>
<div class="abs" style="left:912px;top:441px;font-size:13px;letter-spacing:-0.58px;line-height:20px;color:#1e1e1e;white-space:nowrap">你对待朋友的真诚和善良，就像<span class="ql">“</span>赠人玫瑰，手有余香<span class="qr">”</span>。你的这份</div>
<div class="abs" style="left:-23px;top:521px;width:100px;text-align:center;font-size:15px;line-height:20px;color:#606060">7</div>
<div class="abs" style="left:48px;top:521px;width:120px;text-align:center;font-size:13px;line-height:20px;color:#606060;white-space:nowrap">周思远</div>
<svg style="left:205.1px;top:526.4px" width="51" height="10" viewBox="0 0 51 10"><use href="#stars"/></svg>
<svg style="left:354.6px;top:526.4px" width="51" height="10" viewBox="0 0 51 10"><use href="#stars"/></svg>
<svg style="left:503.3px;top:526.4px" width="51" height="10" viewBox="0 0 51 10"><use href="#stars"/></svg>
<svg style="left:652.1px;top:526.4px" width="51" height="10" viewBox="0 0 51 10"><use href="#stars"/></svg>
<svg style="left:801.2px;top:526.4px" width="51" height="10" viewBox="0 0 51 10"><use href="#stars"/></svg>
<div class="abs" style="left:912px;top:522px;font-size:13px;letter-spacing:-0.58px;line-height:20px;color:#1e1e1e;white-space:nowrap">你的耐心和细心，在学习上发挥了巨大的作用。你的每一次作业和</div>
<div class="abs" style="left:-23px;top:603px;width:100px;text-align:center;font-size:15px;line-height:20px;color:#606060">8</div>
<div class="abs" style="left:48px;top:603px;width:120px;text-align:center;font-size:13px;line-height:20px;color:#606060;white-space:nowrap">任妍希</div>
<svg style="left:205.1px;top:608.4px" width="51" height="10" viewBox="0 0 51 10"><use href="#stars"/></svg>
<svg style="left:354.6px;top:608.4px" width="51" height="10" viewBox="0 0 51 10"><use href="#stars"/></svg>
<svg style="left:503.3px;top:608.4px" width="51" height="10" viewBox="0 0 51 10"><use href="#stars"/></svg>
<svg style="left:652.1px;top:608.4px" width="51" height="10" viewBox="0 0 51 10"><use href="#stars"/></svg>
<svg style="left:801.2px;top:608.4px" width="51" height="10" viewBox="0 0 51 10"><use href="#stars"/></svg>
<div class="abs" style="left:912px;top:604px;font-size:13px;letter-spacing:-0.58px;line-height:20px;color:#1e1e1e;white-space:nowrap">你的善良和纯真让老师深感感动，你的每一份关爱和付出，都展现</div>
</div>
<div class="abs" style="left:421px;top:921px;width:1267px;height:16px;background:#f1f1f1"></div>
<div class="abs" style="left:446px;top:922px;width:1242px;height:14px;background:#c1c1c1"></div>
<svg style="left:426px;top:925px" width="6" height="8"><path d="M5 0 V8 L0 4 Z" fill="#505050"/></svg>
<div class="abs" style="left:529px;top:297px;width:55px;height:629px;border-radius:11px;background:#a5a8a7"></div>
</body></html>
